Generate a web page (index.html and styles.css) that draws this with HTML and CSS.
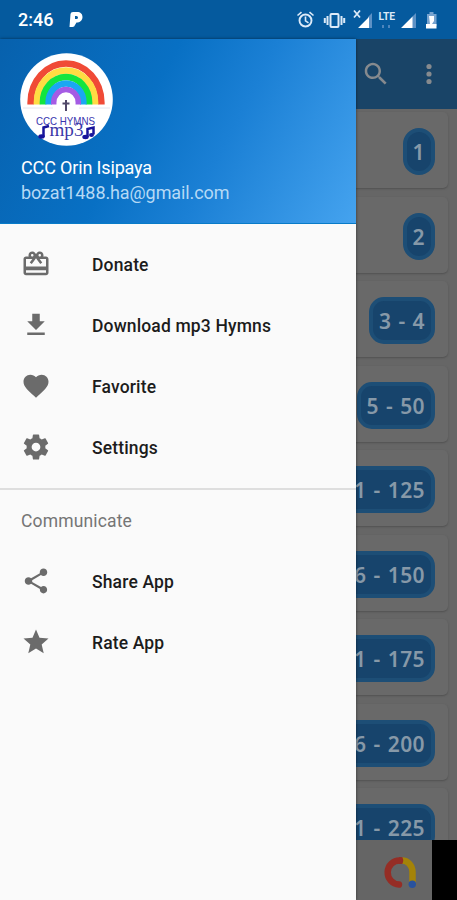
FILE: index.html
```html
<!DOCTYPE html>
<html lang="en">
<head>
<meta charset="utf-8">
<title>CCC Hymns</title>
<link rel="stylesheet" href="styles.css">
</head>
<body>
<header class="status">
  <span class="time">2:46</span>
  <svg class="pandora" width="14" height="17" viewBox="0 0 14 17"><path fill="#fff" fill-rule="evenodd" d="M4 1h4c3.600 0 5.500 2 5.500 5 0 3.500-2.500 5.600-6 5.600L6 14q-.5 2-2.500 2H.5L1.500 3q.2-2 2.500-2zM6 5v3h1.500q1.500 0 1.500-1.500T7.500 5z"/></svg>
  <svg class="status-icons" width="145" height="24" viewBox="0 0 145 24" fill="none" stroke="#dceaf8">
    <circle cx="10.500" cy="12.500" r="6" stroke-width="1.900"/><path stroke-width="1.600" d="M10.500 8.500v4.300l3 2M2.500 7.500l4-3.300M18.500 7.500l-4-3.300"/>
    <rect x="35.500" y="6" width="8" height="13" rx="1" stroke-width="2"/><path stroke-width="2" d="M32.500 8v9M46.500 8v9M29.800 10v5M49.200 10v5"/>
    <path stroke-width="1.800" d="M59 2.500l6 7M65 2.500l-6 7"/>
    <path fill="#5d91c5" stroke="none" d="M73 9l4-4v15h-4zM117 9l4-4v15h-4z"/>
    <path fill="#fff" stroke="none" d="M74 9v11H63zM117.500 8.500V20H106z"/>
    <text class="lte" x="83.500" y="12" textLength="16.500" lengthAdjust="spacingAndGlyphs">LTE</text>
    <path stroke="#4d85bd" stroke-width="2" d="M88 17v3M94 17v3"/>
    <path fill="#77a3cf" stroke="none" d="M132 6h2.500V4h4v2h3v12H132z"/><path fill="#fff" stroke="none" d="M134 8h5v5l-2 3h4.500v4.500H131V16h4z"/>
  </svg>
</header>
<main class="screen">
  <nav class="drawer">
    <section class="profile">
      <svg class="avatar" width="93" height="93" viewBox="0 0 93 93">
        <circle cx="46.500" cy="46.500" r="46.300" fill="#fff"/>
        <g fill="none" stroke-width="6.700">
          <path stroke="#f04a36" d="M10.700 51.500v-2a35.300 39 0 0 1 70.600 0v2"/>
          <path stroke="#ffdc43" d="M17 51.500v-2a29 32 0 0 1 58 0v2"/>
          <path stroke="#12e53e" d="M23 51.500v-2a23 25.500 0 0 1 46 0v2"/>
          <path stroke="#1aa7f2" d="M28.700 51.500v-2a17.300 19 0 0 1 34.600 0v2"/>
          <path stroke="#a55be4" stroke-width="5.500" d="M33.700 51.500v-2a12.300 13 0 0 1 24.600 0v2"/>
        </g>
        <path stroke="#e6e6ef" d="M3 55h30M59 55h31"/>
        <path stroke="#504868" stroke-width="2" d="M46 47v11M42.500 50.500h7"/>
        <text class="logo-name" x="16" y="71.500" textLength="59" lengthAdjust="spacingAndGlyphs">CCC HYMNS</text>
        <text class="logo-format" x="29.500" y="83" textLength="34" lengthAdjust="spacingAndGlyphs">mp3</text>
        <path fill="none" stroke="#17149b" stroke-width="2.500" d="M23.500 84V74.500l5.500-1.500M67.500 84v-8l6-1.500v7"/>
        <g fill="#17149b"><ellipse cx="21.500" cy="83.500" rx="3.200" ry="2.200"/><ellipse cx="65.500" cy="84" rx="3.200" ry="2.200"/><ellipse cx="71.500" cy="82" rx="2.500" ry="2"/></g>
      </svg>
      <div class="name">CCC Orin Isipaya</div>
      <div class="mail">bozat1488.ha@gmail.com</div>
    </section>
    <ul class="menu main-menu">
      <li><svg viewBox="0 0 24 24"><path d="M20 6h-2.180c.11-.31.18-.65.18-1 0-1.660-1.340-3-3-3-1.050 0-1.960.54-2.500 1.350l-.5.670-.5-.68C10.960 2.540 10.050 2 9 2 7.340 2 6 3.340 6 5c0 .35.070.69.180 1H4c-1.110 0-1.990.89-1.990 2L2 19c0 1.110.89 2 2 2h16c1.110 0 2-.89 2-2V8c0-1.110-.89-2-2-2zm-5-2c.55 0 1 .45 1 1s-.45 1-1 1-1-.45-1-1 .45-1 1-1zM9 4c.55 0 1 .45 1 1s-.45 1-1 1-1-.45-1-1 .45-1 1-1zm11 15H4v-2h16v2zm0-5H4V8h5.080L7 10.830 8.620 12 11 8.760l1-1.360 1 1.360L15.380 12 17 10.830 14.920 8H20v6z"/></svg><span>Donate</span></li>
      <li><svg viewBox="0 0 24 24"><path d="M19 9h-4V3H9v6H5l7 7 7-7zM5 18v2h14v-2H5z"/></svg><span>Download mp3 Hymns</span></li>
      <li><svg viewBox="0 0 24 24"><path d="M12 21.350l-1.450-1.320C5.400 15.360 2 12.280 2 8.500 2 5.420 4.420 3 7.500 3c1.740 0 3.410.81 4.500 2.090C13.090 3.810 14.760 3 16.500 3 19.580 3 22 5.420 22 8.500c0 3.780-3.400 6.860-8.550 11.540L12 21.350z"/></svg><span>Favorite</span></li>
      <li><svg viewBox="0 0 24 24"><path d="M19.430 12.980c.04-.32.070-.64.070-.98s-.03-.66-.07-.98l2.110-1.650c.19-.15.24-.42.120-.64l-2-3.460c-.12-.22-.39-.3-.61-.22l-2.490 1c-.52-.4-1.080-.73-1.690-.98l-.38-2.650C14.460 2.180 14.250 2 14 2h-4c-.25 0-.46.18-.49.42l-.38 2.650c-.61.25-1.170.59-1.690.98l-2.490-1c-.23-.09-.49 0-.61.22l-2 3.460c-.13.22-.07.49.12.64l2.110 1.650c-.04.32-.07.65-.07.98s.03.66.07.98l-2.110 1.650c-.19.15-.24.42-.12.64l2 3.460c.12.22.39.3.61.22l2.490-1c.52.4 1.080.73 1.690.98l.38 2.650c.03.24.24.42.49.42h4c.25 0 .46-.18.49-.42l.38-2.650c.61-.25 1.170-.59 1.690-.98l2.490 1c.23.09.49 0 .61-.22l2-3.460c.12-.22.07-.49-.12-.64l-2.110-1.650zM12 15.500c-1.930 0-3.500-1.570-3.500-3.500s1.570-3.500 3.500-3.500 3.500 1.570 3.500 3.500-1.570 3.500-3.500 3.500z"/></svg><span>Settings</span></li>
    </ul>
    <h2 class="subhead">Communicate</h2>
    <ul class="menu">
      <li><svg viewBox="0 0 24 24"><path d="M18 16.080c-.76 0-1.440.3-1.960.77L8.910 12.700c.05-.23.09-.46.09-.7s-.04-.47-.09-.7l7.050-4.110c.54.5 1.250.81 2.040.81 1.660 0 3-1.340 3-3s-1.340-3-3-3-3 1.340-3 3c0 .24.040.47.090.7L8.040 9.810C7.500 9.310 6.790 9 6 9c-1.660 0-3 1.340-3 3s1.340 3 3 3c.79 0 1.500-.31 2.040-.81l7.120 4.160c-.05.21-.08.43-.08.65 0 1.610 1.310 2.920 2.920 2.920 1.610 0 2.920-1.310 2.920-2.920s-1.310-2.920-2.920-2.920z"/></svg><span>Share App</span></li>
      <li><svg viewBox="0 0 24 24"><path d="M12 17.270L18.180 21l-1.640-7.030L22 9.240l-7.190-.61L12 2 9.190 8.630 2 9.240l5.460 4.730L5.820 21z"/></svg><span>Rate App</span></li>
    </ul>
  </nav>
  <section class="page">
    <div class="appbar">
      <svg width="30" height="30" viewBox="0 0 24 24"><path d="M15.500 14h-.79l-.28-.27C15.410 12.590 16 11.110 16 9.500 16 5.910 13.090 3 9.500 3S3 5.910 3 9.500 5.910 16 9.500 16c1.610 0 3.090-.59 4.230-1.570l.27.28v.79l5 4.990L20.490 19l-4.990-5zm-6 0C7.010 14 5 11.990 5 9.500S7.010 5 9.500 5 14 7.010 14 9.500 11.990 14 9.500 14z"/></svg>
      <svg width="8" height="24" viewBox="0 0 8 24"><circle cx="4" cy="4.500" r="2.600"/><circle cx="4" cy="12" r="2.600"/><circle cx="4" cy="19.500" r="2.600"/></svg>
    </div>
    <div class="list">
      <div class="card"><span class="pill single">1</span></div>
      <div class="card"><span class="pill single">2</span></div>
      <div class="card"><span class="pill">3 - 4</span></div>
      <div class="card"><span class="pill">5 - 50</span></div>
      <div class="card"><span class="pill">51 - 125</span></div>
      <div class="card"><span class="pill">126 - 150</span></div>
      <div class="card"><span class="pill">151 - 175</span></div>
      <div class="card"><span class="pill">176 - 200</span></div>
      <div class="card"><span class="pill">201 - 225</span></div>
    </div>
    <div class="ad">
      <div class="ad-body">
        <svg width="33" height="33" viewBox="0 0 33 33" fill="none" stroke-width="6.500"><path stroke="#a48308" d="M18 4.500A10.500 11.500 0 0 1 28.500 16v11"/><path stroke="#952d25" stroke-linecap="round" d="M15 28.500A11.800 12 0 0 1 16 4.500"/><path stroke="#952d25" d="M15 4.500h3.500"/><circle cx="28.300" cy="28.300" r="3.700" fill="#28529e"/></svg>
      </div>
    </div>
  </section>
</main>
</body>
</html>
```
FILE: styles.css
```css
* { box-sizing: border-box; }
body {
  margin: 0;
  width: 457px;
  height: 900px;
  overflow: hidden;
  display: flex;
  flex-direction: column;
  font-family: Roboto, sans-serif;
  background: #666;
}
.status {
  height: 39px;
  flex: none;
  display: flex;
  align-items: center;
  padding-left: 18px;
  background: #055a9e;
  color: #fff;
}
.time { width: 51px; font-size: 18px; font-weight: 500; letter-spacing: 0; }
.status-icons { margin-left: 212px; }
.lte { font: 700 11px Roboto, sans-serif; fill: #dceaf8; stroke: none; }
.screen { flex: 1; min-height: 0; display: flex; }
.drawer {
  width: 356px;
  flex: none;
  background: #fafafa;
  position: relative;
  z-index: 1;
  box-shadow: 0 0 3px rgba(0, 0, 0, .5);
}
.profile {
  height: 185px;
  padding: 14px 20px 0;
  background: linear-gradient(118deg, #0761ad 0%, #0870c4 40%, #1b80d5 62%, #45a3ef 100%);
  border-bottom: 1px solid #087bc8;
  color: #fff;
}
.avatar { display: block; }
.name { margin: 11px 0 0 1px; font-size: 18px; line-height: 22px; letter-spacing: -.15px; }
.mail { margin: 2px 0 0 1px; font-size: 18px; line-height: 23px; letter-spacing: -.1px; color: #b5d9f5; }
.logo-name { font: 11.500px "Liberation Sans", sans-serif; fill: #3936ae; }
.logo-format { font: 18px "Liberation Serif", serif; fill: #3b38a8; }
.menu { margin: 0; padding: 0; list-style: none; }
.main-menu { padding: 10.500px 0; height: 266px; border-bottom: 2px solid #dedede; }
.menu li {
  height: 61px;
  display: flex;
  align-items: center;
  gap: 41px;
  padding-left: 21px;
  font-size: 17.500px;
  font-weight: 500;
  letter-spacing: .15px;
  color: #1c1c1c;
}
.menu svg { width: 30px; height: 30px; margin-top: -2px; fill: #6b6b6b; }
.subhead { margin: 0; height: 61px; padding: 20px 21px 0; font-size: 17.500px; line-height: 22px; font-weight: 400; letter-spacing: .15px; color: #757575; }
.page { flex: 1; min-width: 0; display: flex; flex-direction: column; overflow: hidden; }
.appbar {
  height: 70px;
  flex: none;
  display: flex;
  align-items: center;
  justify-content: space-between;
  padding: 0 24px 0 5px;
  background: #194467;
  fill: #868a8e;
}
.list {
  flex: 1;
  min-height: 0;
  overflow: hidden;
  display: flex;
  flex-direction: column;
  gap: 8.500px;
  padding: 3px 9px 0 0;
  background: #666;
}
.card {
  height: 76px;
  flex: none;
  display: flex;
  align-items: center;
  justify-content: flex-end;
  padding: 3px 13px 0 0;
  background: #696969;
  border-radius: 0 5px 5px 0;
  box-shadow: 0 1px 2px #505050;
}
.pill {
  height: 47px;
  flex: none;
  padding: 0 6px;
  border: 4px solid #1d4e76;
  border-radius: 15px;
  background: #17446c;
  color: #8799a8;
  font: 600 21px/40px "Noto Sans", sans-serif;
  letter-spacing: .4px;
  word-spacing: 1.200px;
  white-space: nowrap;
}
.single { border-radius: 16px; }
.ad { height: 60px; flex: none; display: flex; background: #000; }
.ad-body { width: 76px; display: flex; align-items: center; padding: 5px 0 0 28px; background: #656565; }
```
